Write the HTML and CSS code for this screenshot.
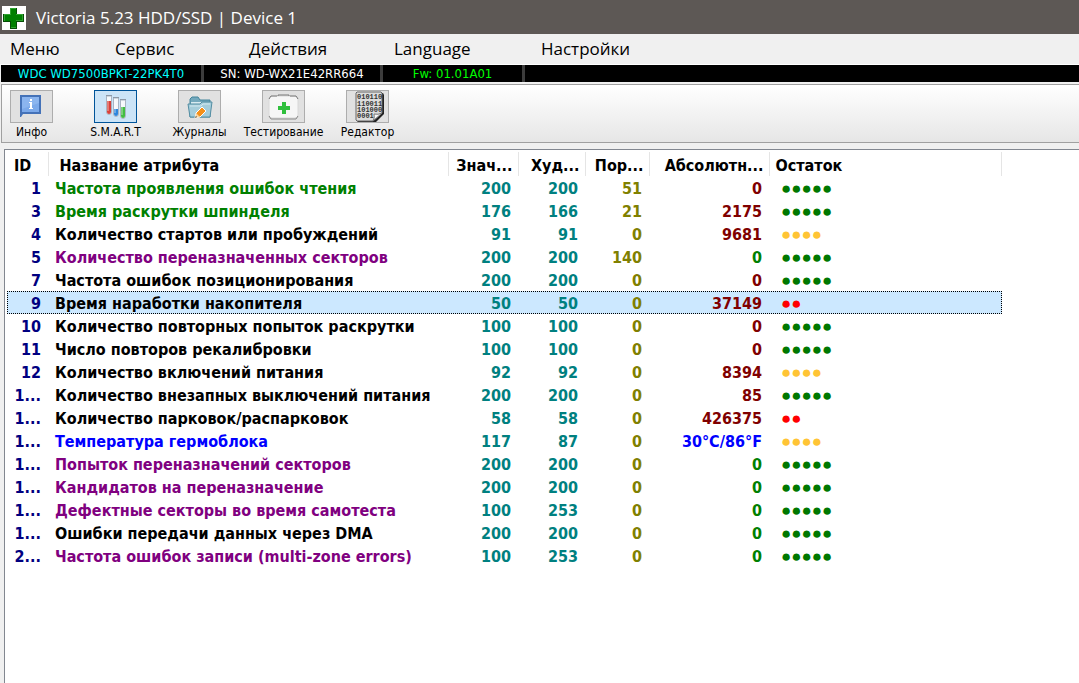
FILE: index.html
```html
<!DOCTYPE html>
<html lang="ru">
<head>
    <meta charset="UTF-8">
    <meta name="viewport" content="width=device-width, initial-scale=1.0">
    <title>Victoria 5.23 HDD/SSD | Device 1</title>
    <link rel="stylesheet" href="styles.css">
</head>
<body>
    <header class="titlebar">
        <svg class="logo" width="24" height="24" viewBox="0 0 24 24">
            <rect width="24" height="24" fill="#fff"/>
            <path d="M8 2h7v6h7v8h-7v7H8v-7H1V8h7z" fill="#064d06"/>
            <path d="M8 2h6v6h7v7h-7v7H9v-7H2V8h6z" fill="#2fa32f"/>
            <path d="M9 3h5v6h6v5h-6v7H9v-6H3V9h6z" fill="#008000"/>
        </svg>
        <h1>Victoria 5.23 HDD/SSD | Device 1</h1>
    </header>

    <nav class="menu">
        <button>Меню</button>
        <button>Сервис</button>
        <button>Действия</button>
        <button>Language</button>
        <button>Настройки</button>
    </nav>

    <div class="drive">
        <span class="model">WDC WD7500BPKT-22PK4T0</span>
        <span class="serial">SN: WD-WX21E42RR664</span>
        <span class="firmware">Fw: 01.01A01</span>
    </div>

    <div class="toolbar">
        <button class="tool">
            <span class="face">
                <svg width="43" height="33" viewBox="0 0 43 33">
                    <path d="M10 5h21v19H13l-2 3h-1z" fill="#4472b8"/>
                    <path d="M12 7h17v15H12z" fill="#7ba9ea"/>
                    <path d="M12 7h17v6L12 19z" fill="#8bb5ef"/>
                    <path d="M19 12h3v6h1v1h-4v-1h1v-5h-1zM20 9h2v2h-2z" fill="#fff"/>
                </svg>
            </span>
            <span>Инфо</span>
        </button>
        <button class="tool active">
            <span class="face">
                <svg width="43" height="33" viewBox="0 0 43 33">
                    <g stroke="#a9b4c2" fill="#f5f8fb">
                        <path d="M12.500 6v16a2.500 2.500 0 0 0 5 0V6z"/>
                        <path d="M19.500 8v16a2.500 2.500 0 0 0 5 0V8z"/>
                        <path d="M26.500 10v16a2.500 2.500 0 0 0 5 0V10z"/>
                    </g>
                    <path d="M13 11h4v11a2 2 0 0 1-4 0z" fill="#d9413a"/>
                    <path d="M20 19h4v5a2 2 0 0 1-4 0z" fill="#2d86dd"/>
                    <path d="M27 17h4v9a2 2 0 0 1-4 0z" fill="#42bd43"/>
                    <path d="M12 5.500h6M19 7.500h6M26 9.500h6" stroke="#8d98a6"/>
                    <path d="M14 8v13M21 10v13M28 12v13" stroke="#fff" opacity=".6"/>
                </svg>
            </span>
            <span>S.M.A.R.T</span>
        </button>
        <button class="tool">
            <span class="face">
                <svg width="43" height="33" viewBox="0 0 43 33">
                    <path d="M12 27V9l2-2h6l2 3h10v17z" fill="#74a9bd" stroke="#43849b"/>
                    <path d="M13 12h17v3H13z" fill="#d8ebf1"/>
                    <path d="M10 14h12l2-2h10l-2 15H12z" fill="#a5cddb" stroke="#538da2"/>
                    <path d="M12 16h11l2-2h7" fill="none" stroke="#d3e9f0"/>
                    <path d="M17 28l1-5 6-6 4 4-6 6z" fill="#f5901a" stroke="#fff"/>
                    <path d="M17 28l1-5 4 4z" fill="#f5d6a5"/>
                    <path d="M17 28l1-2 1 1z" fill="#444"/>
                </svg>
            </span>
            <span>Журналы</span>
        </button>
        <button class="tool">
            <span class="face">
                <svg width="43" height="33" viewBox="0 0 43 33">
                    <rect x="7" y="6" width="29" height="22" rx="3" fill="#f6f6f6" stroke="#d8d8d8"/>
                    <path d="M7 9l2-3h6M28 6h6l2 3M16 6V5h11v1" fill="none" stroke="#777"/>
                    <path d="M7 26l2 3h25l2-3" fill="none" stroke="#8a8a8a"/>
                    <path d="M20 12h4v4h4v4h-4v4h-4v-4h-4v-4h4z" fill="#2fbf3c"/>
                </svg>
            </span>
            <span>Тестирование</span>
        </button>
        <button class="tool">
            <span class="face">
                <svg width="43" height="33" viewBox="0 0 43 33">
                    <path d="M12 3h25l1 2v19l-9 9H13l-3-3z" fill="#222"/>
                    <path d="M11 2h24l1 1v20l-9 8H11l-1-1V3z" fill="#dcdcdc" stroke="#666"/>
                    <g class="bits">
                        <text x="11" y="9">010110</text>
                        <text x="11" y="16">110011</text>
                        <text x="11" y="22">101000</text>
                        <text x="11" y="28">0001</text>
                    </g>
                    <path d="M27 31q2-3 1-7 4 1 8-1z" fill="#fafafa" stroke="#777"/>
                </svg>
            </span>
            <span>Редактор</span>
        </button>
    </div>

    <main class="list">
        <table>
            <colgroup>
                <col class="col-id">
                <col class="col-name">
                <col class="col-value">
                <col class="col-worst">
                <col class="col-limit">
                <col class="col-raw">
                <col class="col-health">
            </colgroup>
            <thead>
                <tr><th>ID</th><th>Название атрибута</th><th>Знач...</th><th>Худ...</th><th>Пор...</th><th>Абсолютн...</th><th>Остаток</th></tr>
            </thead>
            <tbody>
                <tr class="green"><td>1</td><td>Частота проявления ошибок чтения</td><td>200</td><td>200</td><td>51</td><td>0</td><td class="good">●●●●●</td></tr>
                <tr class="green"><td>3</td><td>Время раскрутки шпинделя</td><td>176</td><td>166</td><td>21</td><td>2175</td><td class="good">●●●●●</td></tr>
                <tr><td>4</td><td>Количество стартов или пробуждений</td><td>91</td><td>91</td><td>0</td><td>9681</td><td class="fair">●●●●</td></tr>
                <tr class="purple"><td>5</td><td>Количество переназначенных секторов</td><td>200</td><td>200</td><td>140</td><td class="zero">0</td><td class="good">●●●●●</td></tr>
                <tr><td>7</td><td>Частота ошибок позиционирования</td><td>200</td><td>200</td><td>0</td><td>0</td><td class="good">●●●●●</td></tr>
                <tr class="selected"><td>9</td><td>Время наработки накопителя</td><td>50</td><td>50</td><td>0</td><td>37149</td><td class="bad">●●</td></tr>
                <tr><td>10</td><td>Количество повторных попыток раскрутки</td><td>100</td><td>100</td><td>0</td><td>0</td><td class="good">●●●●●</td></tr>
                <tr><td>11</td><td>Число повторов рекалибровки</td><td>100</td><td>100</td><td>0</td><td>0</td><td class="good">●●●●●</td></tr>
                <tr><td>12</td><td>Количество включений питания</td><td>92</td><td>92</td><td>0</td><td>8394</td><td class="fair">●●●●</td></tr>
                <tr><td>1...</td><td>Количество внезапных выключений питания</td><td>200</td><td>200</td><td>0</td><td>85</td><td class="good">●●●●●</td></tr>
                <tr><td>1...</td><td>Количество парковок/распарковок</td><td>58</td><td>58</td><td>0</td><td>426375</td><td class="bad">●●</td></tr>
                <tr class="blue"><td>1...</td><td>Температура гермоблока</td><td>117</td><td>87</td><td>0</td><td class="temp">30°C/86°F</td><td class="fair">●●●●</td></tr>
                <tr class="purple"><td>1...</td><td>Попыток переназначений секторов</td><td>200</td><td>200</td><td>0</td><td class="zero">0</td><td class="good">●●●●●</td></tr>
                <tr class="purple"><td>1...</td><td>Кандидатов на переназначение</td><td>200</td><td>200</td><td>0</td><td class="zero">0</td><td class="good">●●●●●</td></tr>
                <tr class="purple"><td>1...</td><td>Дефектные секторы во время самотеста</td><td>100</td><td>253</td><td>0</td><td class="zero">0</td><td class="good">●●●●●</td></tr>
                <tr><td>1...</td><td>Ошибки передачи данных через DMA</td><td>200</td><td>200</td><td>0</td><td class="zero">0</td><td class="good">●●●●●</td></tr>
                <tr class="purple"><td>2...</td><td>Частота ошибок записи (multi-zone errors)</td><td>100</td><td>253</td><td>0</td><td class="zero">0</td><td class="good">●●●●●</td></tr>
            </tbody>
        </table>
    </main>
</body>
</html>
```
FILE: styles.css
```css
* {
    box-sizing: border-box;
}

body {
    margin: 0;
    min-height: 100vh;
    display: flex;
    flex-direction: column;
    background: #f0f0f0;
    font-family: "DejaVu Sans Condensed", "Noto Sans", sans-serif;
    color: #000;
}

button {
    padding: 0;
    border: none;
    background: none;
    font-family: inherit;
    color: inherit;
    cursor: pointer;
}

.titlebar {
    display: flex;
    align-items: center;
    gap: 10px;
    height: 34px;
    padding: 4px 2px 2px;
    background: #5d5855;
    color: #fff;
}

.titlebar h1 {
    margin: 0;
    font-family: "Open Sans", sans-serif;
    font-size: 17px;
    font-weight: 400;
    line-height: 24px;
}

.menu {
    display: grid;
    grid-template-columns: 105px 134px 145px 147px auto;
    height: 31px;
    padding: 0 0 2px 10px;
    border-bottom: 1px solid #fff;
}

.menu button {
    font-family: "Open Sans", sans-serif;
    font-size: 17px;
    text-align: left;
}

/* drive passport strip */
.drive {
    display: grid;
    grid-template-columns: 203px 179px 142px 1fr;
    height: 17px;
    margin-left: 1px;
    background: #000;
    font-size: 13px;
    line-height: 17px;
    text-align: center;
    white-space: nowrap;
}

.drive span {
    border-right: 3px solid #3c3c3c;
}

.model {
    color: #00ffff;
}

.serial {
    color: #fff;
}

.firmware {
    color: #00ff00;
}

.toolbar {
    display: flex;
    gap: 41px;
    height: 59px;
    margin: 2px 0 0 1px;
    padding: 5px 8px;
    border: 1px solid #a0a0a0;
    border-right: none;
    background: linear-gradient(#fff, #e6e6e6);
}

.tool {
    display: flex;
    flex-direction: column;
    align-items: center;
    width: 43px;
    font-size: 12px;
    line-height: 18px;
    white-space: nowrap;
}

.face {
    display: flex;
    width: 43px;
    height: 33px;
    background: #e1e1e1;
    outline: 1px solid #adadad;
    outline-offset: -1px;
}

.active .face {
    background: #cce4f7;
    outline-color: #005499;
}

.bits text {
    font-family: "Liberation Mono", monospace;
    font-size: 7px;
    font-weight: bold;
    fill: #333;
}

.list {
    flex: 1;
    margin: 6px 0 0 4px;
    padding: 2px 0 0 2px;
    border-top: 1px solid #828790;
    border-left: 1px solid #828790;
    background: #fff;
}

table {
    table-layout: fixed;
    width: 995px;
    border-collapse: collapse;
    font-size: 16px;
    font-weight: bold;
    line-height: 21px;
    white-space: nowrap;
}

.col-id { width: 41px; }
.col-name { width: 400px; }
.col-value { width: 70px; }
.col-worst { width: 67px; }
.col-limit { width: 64px; }
.col-raw { width: 120px; }

th {
    height: 24px;
    padding: 2px 5px 0;
    border-right: 1px solid #e5e5e5;
    text-align: right;
}

th:nth-child(1) {
    padding-left: 7px;
    text-align: left;
}

th:nth-child(2) {
    padding-left: 11px;
    text-align: left;
}

th:nth-child(7) {
    padding-left: 6px;
    text-align: left;
}

td {
    height: 23px;
    padding: 2px 7px 0;
    color: #008080;
    text-align: right;
}

td:nth-child(1) { color: #000080; }

td:nth-child(2) {
    color: #000;
    text-align: left;
}

td:nth-child(5) { color: #808000; }
td:nth-child(6) { color: #800000; }

td:nth-child(7) {
    padding-left: 12px;
    font-family: "Liberation Sans", sans-serif;
    font-size: 17px;
    font-weight: normal;
    text-align: left;
}

.green td:nth-child(2) { color: #008000; }
.purple td:nth-child(2) { color: #800080; }
.blue td:nth-child(2) { color: #0000ff; }

td.zero:nth-child(6) { color: #008000; }
td.temp:nth-child(6) { color: #0000ff; }

td.good { color: #007800; }
td.fair { color: #ffc435; }
td.bad { color: #ff0000; }

.selected {
    background: #cce8ff;
    outline: 1px dotted #000;
    outline-offset: -1px;
}
```
